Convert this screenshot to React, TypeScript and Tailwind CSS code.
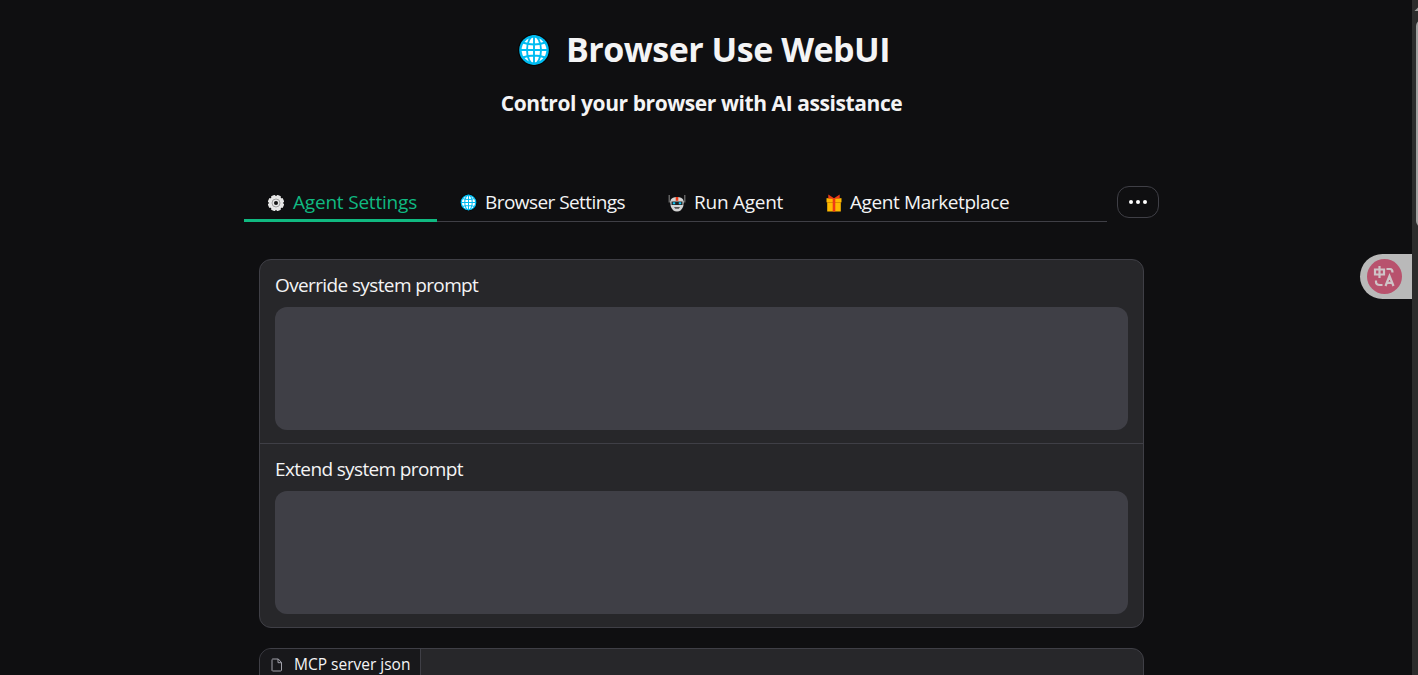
import type { ReactNode } from "react";

function Globe({ className }: { className: string }) {
  return (
    <svg viewBox="0 0 32 32" className={className}>
      <circle cx="16" cy="16" r="16" fill="#050505" />
      <circle cx="16" cy="16" r="14.8" fill="#00bcf2" />
      <circle cx="16" cy="16" r="12.4" fill="#fff" />
      <g fill="none" stroke="#00bcf2" strokeWidth="1.9">
        <path d="M16 2v28M2 16h28M4.5 8.5Q16 12.5 27.5 8.5M4.5 23.5Q16 19.5 27.5 23.5" />
        <ellipse cx="16" cy="16" rx="7" ry="14" />
      </g>
    </svg>
  );
}

function Gear() {
  return (
    <svg viewBox="0 0 18 18" className="size-[18px]">
      <g fill="#e6e6e6">
        <circle cx="9" cy="9" r="7" />
        {[0, 45, 90, 135].map((a) => (
          <rect key={a} x="6.7" y="0.9" width="4.6" height="16.2" rx="1" transform={`rotate(${a + 22.5} 9 9)`} />
        ))}
      </g>
      <circle cx="9" cy="9" r="4" fill="none" stroke="#a0a0a0" />
      <circle cx="9" cy="9" r="2" fill="#111" />
    </svg>
  );
}

function Robot() {
  return (
    <svg viewBox="0 0 18 18" className="size-[18px]">
      <path d="M1.2 1v7.5M16.8 1v7.5" stroke="#777" strokeWidth="1.2" />
      <path d="M1.8 7.5 3.5 6.5v5zM16.2 7.5l-1.7-1v5z" fill="#999" />
      <path d="M2.6 6Q4 3 9 3t6.4 3v6Q13.500 17.500 9 17.500T2.6 12Z" fill="#d4d4d4" />
      <path d="M7.700 3h2.600v3.800H7.700z" fill="#f03a17" />
      <path d="M3.500 7.500h11v3.500h-11z" fill="#222" />
      <path d="M4.800 8.300h2.400v2H4.800zM10.800 8.300h2.400v2h-2.400z" fill="#16c4f4" />
      <path d="M6 13h6l-1.200 1.800H7.200z" fill="#555" />
    </svg>
  );
}

function Gift() {
  return (
    <svg viewBox="0 0 18 18" className="size-[18px]">
      <path d="M2.2 7h13.600v10.500H2.200z" fill="#ffb900" />
      <path d="M1.500 4.200h15v4h-15z" fill="#ffb900" />
      <path d="M1.800 8.500h14.400" stroke="#c97b00" strokeWidth=".7" />
      <path d="M7.700 4.200h2.600v13.300H7.700zM9 4.200 3.300 0.500v4zM9 4.200l5.700-3.700v4z" fill="#f03a17" />
    </svg>
  );
}

function Tab({ icon, label, className }: { icon: ReactNode; label: string; className: string }) {
  return (
    <button className={`flex h-9 shrink-0 items-center whitespace-nowrap text-[19px] ${className}`}>
      {icon}
      <span className="pb-[2px] leading-[30px]">{label}</span>
    </button>
  );
}

function Field({ label, className, tracking }: { label: string; className: string; tracking: string }) {
  return (
    <div className={`flex flex-col px-[15px] pt-[11px] ${className}`}>
      <label className={`mb-2 h-7 whitespace-nowrap text-[19px] leading-7 ${tracking}`}>{label}</label>
      <textarea className="block h-[123px] w-full resize-none rounded-[12px] bg-[#3f3f46] outline-none" />
    </div>
  );
}

export default function App() {
  return (
    <div className="relative flex h-[675px] w-full overflow-hidden bg-[#0f0f11] font-['Open_Sans','Noto_Sans',sans-serif] text-[#f4f4f5]">
      <main className="flex min-w-0 flex-1 flex-col">
        <header className="flex h-[186px] shrink-0 flex-col items-center">
          <h1 className="mt-[25px] flex h-[50px] items-center whitespace-nowrap pr-1 text-[34px] font-bold">
            <Globe className="mr-[16px] size-8" />
            <span className="pb-[2px] leading-[48px] tracking-[-0.5px]">Browser Use WebUI</span>
          </h1>
          <p className="mt-[13px] whitespace-nowrap pr-[9px] text-[21px] font-bold leading-[30px] tracking-[-0.42px]">Control your browser with AI assistance</p>
        </header>
        <nav className="ml-[244px] flex h-9 w-[915px] shrink-0 items-start">
          <div className="flex h-9 w-[863px] border-b border-[#3f3f46]">
            <Tab icon={<Gear />} label="Agent Settings" className="w-[193px] gap-2 border-b-[3px] border-[#10b981] pl-[23px] tracking-[-0.2px] text-[#10b981]" />
            <Tab icon={<Globe className="size-[17px]" />} label="Browser Settings" className="w-[209px] gap-2 border-b-[3px] border-transparent pl-[23px] tracking-[-0.56px]" />
            <Tab icon={<Robot />} label="Run Agent" className="w-[157px] gap-2 border-b-[3px] border-transparent pl-[22px] tracking-[-0.25px]" />
            <Tab icon={<Gift />} label="Agent Marketplace" className="gap-[7px] border-b-[3px] border-transparent pl-[22px] tracking-[-0.4px]" />
          </div>
          <button className="ml-[10px] flex h-8 w-[42px] items-center justify-center gap-[3px] rounded-[12px] border border-[#3f3f46]">
            <i className="size-1 rounded-full bg-white" />
            <i className="size-1 rounded-full bg-white" />
            <i className="size-1 rounded-full bg-white" />
          </button>
        </nav>
        <section className="ml-[259px] mt-[37px] h-[369px] w-[885px] shrink-0 rounded-[12px] border border-[#3f3f46] bg-[#27272a]">
          <Field label="Override system prompt" className="h-[184px] border-b border-[#3f3f46]" tracking="tracking-[-0.62px]" />
          <Field label="Extend system prompt" className="" tracking="tracking-[-0.64px]" />
        </section>
        <section className="ml-[259px] mt-5 h-[60px] w-[885px] shrink-0 overflow-hidden rounded-[12px] border border-[#3f3f46] bg-[#27272a]">
          <div className="flex h-8 w-[161px] items-center rounded-br-[6px] border-r border-b border-[#3f3f46] bg-[#18181b] pl-[11px]">
            <svg viewBox="0 0 12 14" className="h-[14px] w-3" fill="none" stroke="#a1a1aa" strokeWidth="1">
              <path d="M1.500 1h5.800l3.200 3.500V12a1 1 0 0 1-1 1h-8a1 1 0 0 1-.5-1V2a1 1 0 0 1 .5-1ZM7 1v3.700h3.500" />
            </svg>
            <span className="ml-[11px] whitespace-nowrap pb-[1px] text-[15.5px] leading-[30px]">MCP server json</span>
          </div>
        </section>
      </main>
      <aside className="h-full w-[6px] shrink-0 overflow-hidden bg-[#2c2c2c]">
        <svg viewBox="0 0 6 20" className="h-5 w-[6px]"><path d="M2.500 11 6 7.500V11z" fill="#a0a0a0" /></svg>
        <div className="ml-1 h-[207px] w-3 rounded-[6px] bg-[#9f9f9f]" />
      </aside>
      <div className="absolute right-[6px] top-[254px] flex h-[45px] w-[52px] items-center rounded-l-full bg-[#b9b9b9] pl-[7px]">
        <svg viewBox="0 0 35 35" className="size-[35px]" fill="none" stroke="#cfc4c7" strokeWidth="2.2">
          <circle cx="17.500" cy="17.500" r="17.500" fill="#b8526d" stroke="none" />
          <path d="M8 10.500h9v5H8zM12.500 7v12M19.500 10h3.500q2.500 0 2.500 3.500M9 21.500v1.500q0 3 4 3h2.500M18.500 27l4-10 4 10M20 23.800h5" />
        </svg>
      </div>
    </div>
  );
}
